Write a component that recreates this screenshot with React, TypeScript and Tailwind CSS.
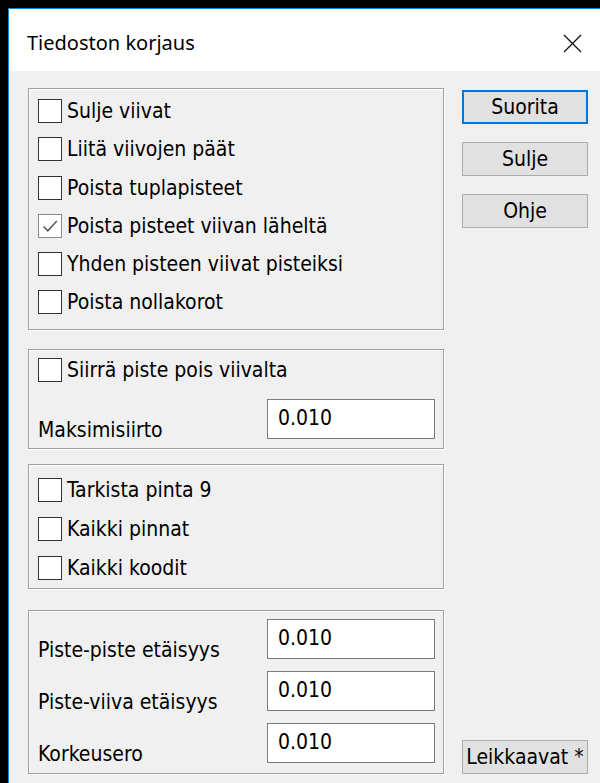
import React from "react";

const uiFont = "font-['DejaVu_Sans_Condensed','DejaVu_Sans',sans-serif] text-[21px] leading-[24px] text-black";

function Check({ checked = false }: { checked?: boolean }) {
  return (
    <span
      className={`flex h-[24px] w-[24px] shrink-0 items-center justify-center border bg-white ${
        checked ? "border-[#8a8a8a]" : "border-[#333333]"
      }`}
    >
      {checked && (
        <svg width="18" height="18" viewBox="0 0 18 18">
          <path d="M2.5 9.5 L6.8 13.8 L15.8 4" fill="none" stroke="#5a5a5a" strokeWidth="1.5" />
        </svg>
      )}
    </span>
  );
}

function CheckRow({ label, checked, h }: { label: string; checked?: boolean; h: string }) {
  return (
    <div className={`flex items-center gap-[5px] pl-[9px] ${h}`}>
      <Check checked={checked} />
      <span className="whitespace-nowrap">{label}</span>
    </div>
  );
}

function Field({ label, value = "0.010" }: { label: string; value?: string }) {
  return (
    <div className="flex h-[40px] items-end pl-[9px] pr-[8px]">
      <span className="mb-[-3px] flex-1 whitespace-nowrap">{label}</span>
      <div className="flex h-[40px] w-[168px] items-center border border-[#7a7a7a] bg-white pb-[3px] pl-[10px]">
        {value}
      </div>
    </div>
  );
}

function Group({ className, children }: { className: string; children: React.ReactNode }) {
  return (
    <div
      className={`border border-[#a0a0a0] shadow-[inset_1px_1px_0_#ffffff,1px_1px_0_#ffffff] ${className}`}
    >
      {children}
    </div>
  );
}

function Button({ label, focused }: { label: string; focused?: boolean }) {
  return (
    <div
      className={`flex h-[34px] w-[126px] items-center justify-center overflow-visible whitespace-nowrap bg-[#e1e1e1] ${
        focused ? "border-2 border-[#0078d7]" : "border border-[#adadad]"
      }`}
    >
      {label}
    </div>
  );
}

export default function App() {
  return (
    <div className="h-[783px] w-[600px] overflow-hidden bg-black pl-[8px] pt-[8px]">
      <div className="flex h-full flex-col border-l border-t border-[#1883d7] bg-[#f0f0f0]">
        {/* title bar */}
        <div className="flex h-[62px] shrink-0 items-center justify-between bg-white pl-[18px] pr-[18px] pt-[6px]">
          <span className="font-['Noto_Sans',sans-serif] text-[20px] text-black">Tiedoston korjaus</span>
          <svg width="19" height="19" viewBox="0 0 19 19">
            <path d="M1 1 L18 18 M18 1 L1 18" stroke="#111" strokeWidth="1.3" fill="none" />
          </svg>
        </div>

        {/* dialog body */}
        <div className={`flex flex-1 pl-[19px] ${uiFont}`}>
          <div className="flex w-[416px] flex-col">
            <Group className="mt-[17px] h-[242px] pt-[2px]">
              <CheckRow h="h-[39px]" label="Sulje viivat" />
              <CheckRow h="h-[38px]" label="Liitä viivojen päät" />
              <CheckRow h="h-[39px]" label="Poista tuplapisteet" />
              <CheckRow h="h-[38px]" label="Poista pisteet viivan läheltä" checked />
              <CheckRow h="h-[38px]" label="Yhden pisteen viivat pisteiksi" />
              <CheckRow h="h-[38px]" label="Poista nollakorot" />
            </Group>

            <Group className="mt-[19px] h-[100px]">
              <CheckRow h="h-[40px]" label="Siirrä piste pois viivalta" />
              <div className="mt-[9px]">
                <Field label="Maksimisiirto" />
              </div>
            </Group>

            <Group className="mt-[15px] h-[125px] pt-[5px]">
              <CheckRow h="h-[39px]" label="Tarkista pinta 9" />
              <CheckRow h="h-[39px]" label="Kaikki pinnat" />
              <CheckRow h="h-[40px]" label="Kaikki koodit" />
            </Group>

            <Group className="mt-[21px] flex h-[164px] flex-col gap-[12px] pt-[8px]">
              <Field label="Piste-piste etäisyys" />
              <Field label="Piste-viiva etäisyys" />
              <Field label="Korkeusero" />
            </Group>
          </div>

          <div className="ml-[18px] flex flex-col pb-[9px] pt-[19px]">
            <Button label="Suorita" focused />
            <div className="mt-[18px]">
              <Button label="Sulje" />
            </div>
            <div className="mt-[18px]">
              <Button label="Ohje" />
            </div>
            <div className="mt-auto">
              <Button label="Leikkaavat *" />
            </div>
          </div>
        </div>
      </div>
    </div>
  );
}
